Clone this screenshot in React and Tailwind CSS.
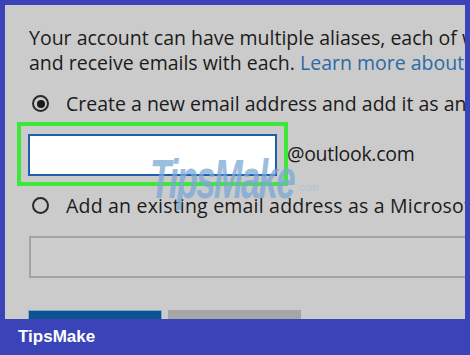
export default function App() {
  const ui = { fontFamily: '"Open Sans", "Noto Sans", sans-serif' };

  return (
    <div className="relative w-[470px] h-[355px] bg-[#3a44b8] flex flex-col overflow-hidden">
      <div
        className="relative mt-[5px] ml-[5px] w-[460px] h-[314px] bg-[#cbcbcb] overflow-hidden whitespace-nowrap text-[#1b1b1b]"
        style={ui}
      >
        <p className="pt-[20px] pl-[24px] text-[19.5px] leading-[25px]">
          Your account can have multiple aliases, each of which
          <br />
          and receive emails with each.{" "}
          <span className="text-[#2b6aa8]">Learn more about aliases</span>
        </p>

        <div className="mt-[16px] flex items-center h-[25px] pl-[27px]">
          <span className="shrink-0 w-[17px] h-[17px] rounded-full border-2 border-[#2a2a2a] flex items-center justify-center">
            <span className="w-[8px] h-[8px] rounded-full bg-[#1a1a1a]" />
          </span>
          <span className="ml-[17px] text-[19.5px]">
            Create a new email address and add it as an alias
          </span>
        </div>

        <div className="mt-[6px] pl-[12px] flex items-center">
          <div className="shrink-0 border-4 border-[#3ee83a] pt-[8px] pb-[6px] px-[7px]">
            <div className="w-[249px] h-[42px] border-2 border-[#1f5fae] bg-white" />
          </div>
          <span className="text-[19.5px] tracking-[-0.3px] -ml-px">@outlook.com</span>
        </div>

        <div className="mt-[7px] flex items-center h-[25px] pl-[27px]">
          <span className="shrink-0 w-[17px] h-[17px] rounded-full border-2 border-[#2a2a2a]" />
          <span className="ml-[17px] text-[19.5px] tracking-[0.2px]">
            Add an existing email address as a Microsoft
          </span>
        </div>

        <div className="mt-[18px] ml-[24px] w-[460px] h-[42px] border-2 border-[#a3a3a3] bg-[#cdcdcd]" />

        <div className="mt-[32px] ml-[23px] flex gap-[6px]">
          <div className="w-[134px] h-[30px] bg-[#0c5394] border border-[#7fa8d0]" />
          <div className="w-[133px] h-[30px] bg-[#a6a6a6]" />
        </div>
      </div>

      <div className="flex-1 flex items-center pl-[18px]">
        <span
          className="text-white font-bold text-[17px]"
          style={{ fontFamily: '"Liberation Sans", Arial, sans-serif' }}
        >
          TipsMake
        </span>
      </div>

      <div
        className="absolute left-[150px] top-[137px] pointer-events-none"
        style={{ fontFamily: '"Liberation Sans", Arial, sans-serif' }}
      >
        <span className="text-[#79a8d6] opacity-75 font-bold italic text-[56px] tracking-tighter inline-block origin-left scale-x-[0.62]">
          TipsMake
        </span>
      </div>
      <span
        className="absolute left-[297px] top-[180px] text-[#a9c3da] text-[10px] opacity-80"
        style={{ fontFamily: '"Liberation Sans", Arial, sans-serif' }}
      >
        .com
      </span>
    </div>
  );
}
